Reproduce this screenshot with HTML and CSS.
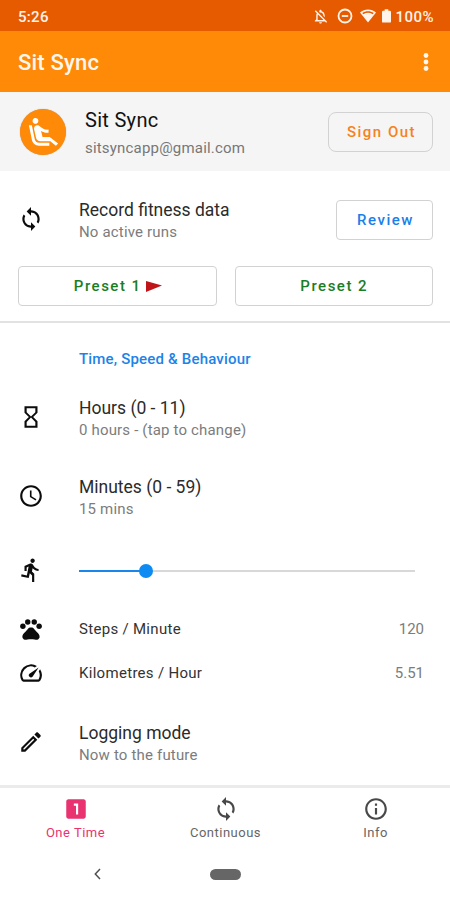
FILE: index.html
```html
<!DOCTYPE html>
<html lang="en">
<head>
<meta charset="utf-8">
<title>Sit Sync</title>
<link rel="stylesheet" href="styles.css">
</head>
<body>
<div class="status">
  <span class="clock">5:26</span>
  <div class="status-icons">
    <svg class="bell" viewBox="0 0 24 24"><path d="M12 22c1.1 0 2-.9 2-2h-4c0 1.1.9 2 2 2zm0-15.5c2.49 0 4 2.02 4 4.5v.1l2 2V11c0-3.07-1.63-5.64-4.5-6.32V4c0-.83-.67-1.5-1.5-1.5s-1.5.67-1.5 1.5v.68c-.24.06-.47.15-.69.23l1.64 1.64c.18-.02.36-.05.55-.05zM5.41 3.35L4 4.76l2.81 2.81C6.29 8.57 6 9.74 6 11v5l-2 2v1h14.24l1.74 1.74 1.41-1.41L5.41 3.35zM16 17H8v-6c0-.68.12-1.32.34-1.9L16 16.76V17z"/></svg>
    <svg class="dnd" viewBox="0 0 16 16"><circle cx="8" cy="8" r="6.5" fill="none" stroke="currentColor" stroke-width="1.8"/><path d="M4.8 7.1h6.4v1.8H4.8z"/></svg>
    <svg class="wifi" viewBox="0 0 16 14"><path d="M0 3.6C4.600-.4 11.400-.4 16 3.600L8 13.500z"/><path d="M2.300 4.100C5.700 1.600 10.300 1.600 13.700 4.100L12.800 5.200C9.600 3.400 6.400 3.400 3.200 5.200z" fill="#e65a00"/></svg>
    <svg class="battery" viewBox="0 0 10 15"><path d="M3 0h4v1.800h1.700q1.300 0 1.300 1.300v10.400q0 1.300-1.300 1.300H1.300Q0 14.800 0 13.500V3.100q0-1.300 1.300-1.300H3z"/></svg>
    <span class="percent">100%</span>
  </div>
</div>
<header class="appbar">
  <h1>Sit Sync</h1>
  <svg class="more" viewBox="0 0 6 18"><circle cx="3" cy="2.500" r="2.400"/><circle cx="3" cy="9" r="2.400"/><circle cx="3" cy="15.500" r="2.400"/></svg>
</header>
<section class="account">
  <div class="avatar"><svg viewBox="0 0 24 24"><path d="M5.350 5.640c-.9-.64-1.120-1.880-.49-2.790.63-.9 1.880-1.120 2.790-.49.9.64 1.120 1.880.49 2.790-.64.9-1.880 1.120-2.790.49zM16 19H8.930c-1.480 0-2.740-1.080-2.960-2.540L4 7H2l1.990 9.760C4.370 19.200 6.470 21 8.940 21H16v-2zm.23-4h-4.880l-1.030-4.100c1.580.89 3.280 1.540 5.150 1.220V9.990c-1.630.31-3.440-.27-4.690-1.250L9.140 7.470c-.23-.18-.49-.3-.76-.38-.32-.09-.66-.12-.99-.06h-.02c-1.230.22-2.050 1.390-1.840 2.610l1.350 5.920C7.160 16.980 8.390 18 9.830 18h6.850l3.820 3 1.500-1.500-5.770-4.500z"/></svg></div>
  <div class="who"><div class="name">Sit Sync</div><div class="mail">sitsyncapp@gmail.com</div></div>
  <button class="btn signout">Sign Out</button>
</section>
<section class="record">
  <div class="row head">
    <svg class="icon" viewBox="0 0 24 24"><path d="M12 4V1L8 5l4 4V6c3.310 0 6 2.690 6 6 0 1.010-.25 1.970-.7 2.800l1.460 1.460C19.540 15.030 20 13.570 20 12c0-4.420-3.580-8-8-8zm0 14c-3.310 0-6-2.690-6-6 0-1.010.25-1.970.7-2.800L5.240 7.740C4.460 8.970 4 10.430 4 12c0 4.420 3.580 8 8 8v3l4-4-4-4v3z"/></svg>
    <div class="text"><div class="title">Record fitness data</div><div class="sub">No active runs</div></div>
    <button class="btn review">Review</button>
  </div>
  <div class="presets">
    <button class="btn preset">Preset 1<svg class="flag" viewBox="0 0 16 11"><path d="M0 0L16 4.500 0 11z"/></svg></button>
    <button class="btn preset">Preset 2</button>
  </div>
</section>
<main>
  <h2>Time, Speed &amp; Behaviour</h2>
  <div class="row tall">
    <svg class="icon" viewBox="0 0 24 24"><path d="M6 2v6h.01L6 8.010 10 12l-4 4 .01.01H6V22h12v-5.990h-.01L18 16l-4-4 4-3.990-.01-.01H18V2H6zm10 14.500V20H8v-3.500l4-4 4 4zm-4-5l-4-4V4h8v3.500l-4 4z"/></svg>
    <div class="text"><div class="title">Hours (0 - 11)</div><div class="sub">0 hours - (tap to change)</div></div>
  </div>
  <div class="row tall">
    <svg class="icon" viewBox="0 0 24 24"><path d="M11.990 2C6.470 2 2 6.480 2 12s4.470 10 9.990 10C17.520 22 22 17.520 22 12S17.520 2 11.990 2zM12 20c-4.420 0-8-3.580-8-8s3.580-8 8-8 8 3.580 8 8-3.580 8-8 8zm.5-13H11v6l5.250 3.150.75-1.230-4.500-2.670z"/></svg>
    <div class="text"><div class="title">Minutes (0 - 59)</div><div class="sub">15 mins</div></div>
  </div>
  <div class="row slide">
    <svg class="icon" viewBox="0 0 24 24"><path d="M13.490 5.480c1.100 0 2-.9 2-2s-.9-2-2-2-2 .9-2 2 .9 2 2 2zm-3.600 13.900l1-4.400 2.100 2v6h2v-7.500l-2.100-2 .6-3c1.300 1.500 3.300 2.500 5.500 2.500v-2c-1.900 0-3.500-1-4.300-2.400l-1-1.600c-.4-.6-1-1-1.700-1-.3 0-.5.1-.8.1l-5.200 2.200v4.700h2v-3.400l1.800-.7-1.600 8.100-4.900-1-.4 2 7 1.400z"/></svg>
    <div class="slider"><div class="done" style="width:20%"></div><div class="thumb"></div><div class="rest"></div></div>
  </div>
  <div class="row stat">
    <svg class="icon" viewBox="0 0 24 24"><circle cx="4.500" cy="9.500" r="2.500"/><circle cx="9" cy="5.500" r="2.500"/><circle cx="15" cy="5.500" r="2.500"/><circle cx="19.500" cy="9.500" r="2.500"/><path d="M17.340 14.860c-.87-1.020-1.600-1.890-2.480-2.910-.46-.54-1.050-1.080-1.750-1.320-.11-.04-.22-.07-.33-.09-.25-.04-.52-.04-.78-.04s-.53 0-.79.05c-.11.02-.22.05-.33.09-.7.24-1.280.78-1.750 1.320-.87 1.020-1.600 1.890-2.480 2.910-1.310 1.310-2.920 2.760-2.620 4.790.29 1.020 1.020 2.030 2.330 2.320.73.15 3.060-.44 5.540-.44h.18c2.480 0 4.810.58 5.540.44 1.310-.29 2.040-1.310 2.330-2.320.31-2.040-1.300-3.490-2.610-4.800z"/></svg>
    <span class="label">Steps / Minute</span><span class="value">120</span>
  </div>
  <div class="row stat">
    <svg class="icon" viewBox="0 0 24 24"><path d="M20.380 8.570l-1.230 1.850a8 8 0 0 1-.22 7.580H5.070A8 8 0 0 1 15.580 6.850l1.850-1.230A10 10 0 0 0 3.350 19a2 2 0 0 0 1.720 1h13.850a2 2 0 0 0 1.740-1 10 10 0 0 0-.27-10.440zm-9.790 6.840a2 2 0 0 0 2.830 0l5.660-8.490-8.490 5.660a2 2 0 0 0 0 2.830z"/></svg>
    <span class="label">Kilometres / Hour</span><span class="value">5.51</span>
  </div>
  <div class="row logging">
    <svg class="icon" viewBox="0 0 24 24"><path d="M14.060 9.020l.92.92L5.920 19H5v-.92l9.060-9.060M17.660 3c-.25 0-.51.1-.7.29l-1.830 1.830 3.750 3.750 1.830-1.830c.39-.39.39-1.020 0-1.410l-2.340-2.340c-.2-.2-.45-.29-.71-.29zm-3.600 3.190L3 17.250V21h3.750L17.810 9.940l-3.750-3.750z"/></svg>
    <div class="text"><div class="title">Logging mode</div><div class="sub">Now to the future</div></div>
  </div>
</main>
<nav class="tabs">
  <div class="tab active"><svg class="icon" viewBox="0 0 24 24"><path d="M19 3H5c-1.100 0-2 .9-2 2v14c0 1.100.9 2 2 2h14c1.100 0 2-.9 2-2V5c0-1.100-.9-2-2-2zm-5 14h-2V9h-2V7h4v10z"/></svg><span>One Time</span></div>
  <div class="tab"><svg class="icon" viewBox="0 0 24 24"><path d="M12 4V1L8 5l4 4V6c3.310 0 6 2.690 6 6 0 1.010-.25 1.970-.7 2.800l1.460 1.460C19.540 15.030 20 13.570 20 12c0-4.420-3.580-8-8-8zm0 14c-3.310 0-6-2.690-6-6 0-1.010.25-1.970.7-2.800L5.240 7.740C4.460 8.970 4 10.430 4 12c0 4.420 3.580 8 8 8v3l4-4-4-4v3z"/></svg><span>Continuous</span></div>
  <div class="tab"><svg class="icon" viewBox="0 0 24 24"><path d="M11 7h2v2h-2zm0 4h2v6h-2zm1-9C6.480 2 2 6.480 2 12s4.480 10 10 10 10-4.480 10-10S17.520 2 12 2zm0 18c-4.410 0-8-3.590-8-8s3.590-8 8-8 8 3.590 8 8-3.590 8-8 8z"/></svg><span>Info</span></div>
</nav>
<footer class="system">
  <svg class="back" viewBox="0 0 7 12"><path d="M6 1L1.300 6 6 11" fill="none" stroke="#505050" stroke-width="1.500"/></svg>
  <div class="home"></div>
  <div></div>
</footer>
</body>
</html>
```

FILE: styles.css
```css
* { box-sizing: border-box; }
body {
  margin: 0;
  width: 450px;
  height: 900px;
  overflow: hidden;
  background: #fff;
  font-family: Roboto, "Liberation Sans", sans-serif;
  color: #2b2b2b;
}
svg { display: block; fill: currentColor; flex: none; }
h1, h2 { margin: 0; font-weight: 500; }

.status {
  height: 31px;
  padding: 1px 16px 0 18px;
  display: flex;
  align-items: center;
  justify-content: space-between;
  background: #e65a00;
  color: #fff3ea;
  font-size: 15px;
  font-weight: 500;
}
.clock, .percent { padding-top: 1px; letter-spacing: .3px; }
.percent { letter-spacing: .5px; }
.status-icons { display: flex; align-items: center; }
.bell { width: 17px; height: 17px; margin-right: 8px; }
.dnd { width: 16px; height: 16px; margin-right: 7px; }
.wifi { width: 16px; height: 14px; margin-right: 6px; }
.battery { width: 9px; height: 14px; margin-right: 4px; }

.appbar {
  height: 61px;
  padding: 2px 21px 0 18px;
  display: flex;
  align-items: center;
  justify-content: space-between;
  background: #ff8a08;
  color: #fff7ee;
}
.appbar h1 { font-size: 22px; letter-spacing: .2px; }
.more { width: 6px; height: 18px; margin-top: -2px; }

.account {
  height: 79px;
  padding: 0 17px 0 20px;
  display: flex;
  align-items: center;
  background: #f5f5f5;
}
.avatar {
  width: 46px;
  height: 46px;
  margin-top: 1px;
  display: grid;
  place-items: center;
  border-radius: 50%;
  background: #ff8a08;
  color: #fff;
  box-shadow: 0 0 1px #a98c6e;
}
.avatar svg { width: 35px; height: 35px; }
.who { flex: 1; margin-left: 19px; padding-top: 5px; }
.name { font-size: 20px; line-height: 28px; letter-spacing: .3px; color: #111; }
.mail { font-size: 15px; line-height: 28px; letter-spacing: .19px; color: #777; }

.btn {
  display: flex;
  align-items: center;
  justify-content: center;
  height: 40px;
  padding: 0 0 0 1px;
  border: 1.500px solid #d2d2d2;
  border-radius: 4px;
  background: transparent;
  font: 500 15px Roboto, "Liberation Sans", sans-serif;
  letter-spacing: 1.500px;
}
.signout { width: 105px; padding-left: 2px; border-radius: 8px; color: #f58220; }
.review { width: 97px; padding-left: 2px; color: #1a80e8; }

.row {
  display: flex;
  align-items: center;
  padding: 0 26px 0 18px;
}
.icon { width: 26px; height: 26px; color: #0c0c0c; }
.row > .icon { margin-right: 35px; margin-bottom: 1px; }
.text { flex: 1; padding-top: 2px; }
.title { font-size: 17.500px; line-height: 22px; }
.sub { font-size: 15px; line-height: 22px; letter-spacing: .17px; color: #7c7c7c; }

.record { height: 152px; border-bottom: 2px solid #e2e2e2; }
.head { height: 95px; padding: 2px 17px 0 18px; }
.presets { display: flex; gap: 18px; padding: 0 17px 0 18px; }
.preset { flex: 1; color: #1a7d26; }
.flag { width: 16px; height: 11px; margin-left: 4px; color: #c0141b; }

main { height: 462px; }
h2 {
  height: 55px;
  padding: 17px 0 0 79px;
  font-size: 15px;
  line-height: 38px;
  letter-spacing: .18px;
  color: #1c83e8;
}
.tall { height: 79px; }
.slide { height: 71px; padding: 0 35px 2px 18px; }
.slider { flex: 1; display: flex; align-items: center; }
.done { height: 2px; background: #1787ec; }
.thumb { width: 14px; height: 14px; margin: 0 -7px; border-radius: 50%; background: #0d8bf2; z-index: 1; }
.rest { flex: 1; height: 2px; background: #d8d8d8; }
.stat { height: 44px; font-size: 15px; }
.label { flex: 1; letter-spacing: .3px; color: #333; }
.value { color: #7c7c7c; }
.logging { height: 90px; padding-top: 5px; }

.tabs {
  height: 60px;
  padding-top: 8px;
  display: grid;
  grid-template-columns: repeat(3, 1fr);
  border-top: 3px solid #ebebeb;
}
.tab {
  display: flex;
  flex-direction: column;
  align-items: center;
  padding-left: 1px;
  font-size: 13px;
  line-height: 22px;
  letter-spacing: .5px;
  color: #666;
}
.tab .icon { color: #484848; }
.tab.active, .tab.active .icon { color: #e93270; }

.system {
  height: 56px;
  padding: 2px 94px 0;
  display: grid;
  grid-template-columns: 1fr 31px 1fr;
  align-items: center;
}
.back { width: 7px; height: 12px; }
.home { width: 31px; height: 11px; border-radius: 6px; background: #666; }
```
